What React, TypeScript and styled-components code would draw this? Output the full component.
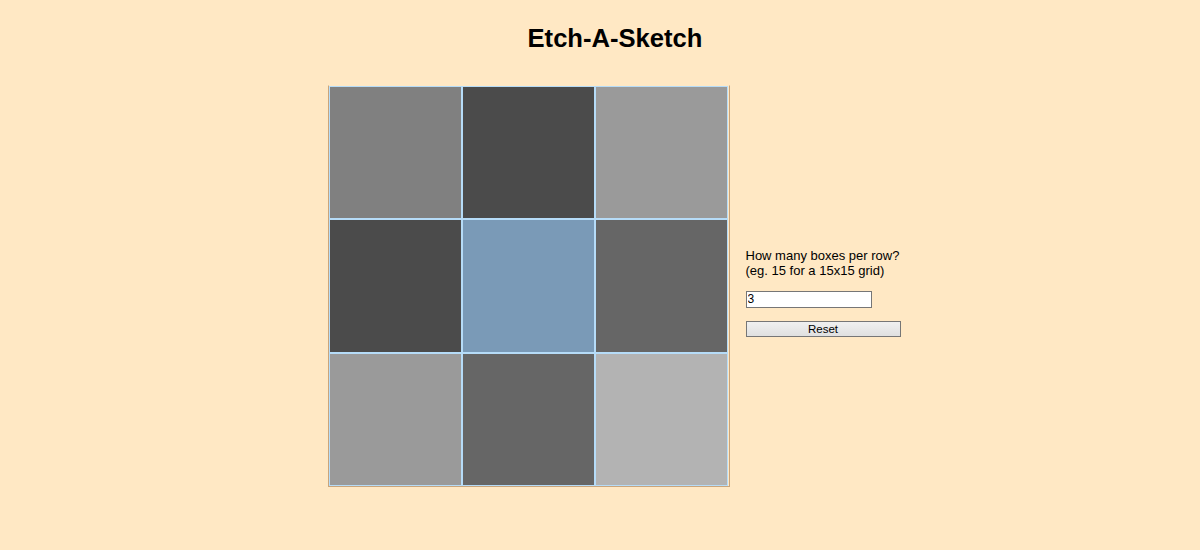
import React, { useState } from "react";
import styled, { createGlobalStyle } from "styled-components";

const GlobalStyle = createGlobalStyle`
  html, body {
    background: #ffe8c4;
  }
  body {
    margin: 8px;
    font-family: "Liberation Sans", Arial, sans-serif;
    color: #000;
  }
`;

// shades per cell, as they were left after some sketching
const SHADES = [
  "#808080", "#4b4b4b", "#9a9a9a",
  "#4b4b4b", "#7a9ab7", "#666666",
  "#9a9a9a", "#666666", "#b3b3b3",
];

export default function App() {
  const [size, setSize] = useState("3");
  const n = 3;

  return (
    <>
      <GlobalStyle />
      <Page>
        <Title>Etch-A-Sketch</Title>
        <Row>
          <Board $n={n}>
            {SHADES.map((c, i) => (
              <Cell key={i} style={{ background: c }} />
            ))}
          </Board>
          <Panel>
            <Prompt>
              How many boxes per row?
              <br />
              (eg. 15 for a 15x15 grid)
            </Prompt>
            <SizeInput value={size} onChange={(e) => setSize(e.target.value)} />
            <ResetBtn>Reset</ResetBtn>
          </Panel>
        </Row>
      </Page>
    </>
  );
}

const Page = styled.div`
  padding-left: 28px;
`;

const Title = styled.h1`
  margin: 16px 0 0;
  padding-left: 2px;
  text-align: center;
  font-size: 25.6px;
  font-weight: 700;
`;

const Row = styled.div`
  display: flex;
  justify-content: center;
  align-items: center;
  gap: 16px;
  margin-top: 32px;
`;

const Board = styled.div<{ $n: number }>`
  display: grid;
  grid-template-columns: repeat(${(p) => p.$n}, 1fr);
  grid-template-rows: repeat(${(p) => p.$n}, 1fr);
  width: 400px;
  height: 400px;
  border: 1px solid #c9a57c;
  border-top-color: #ffe8c4;
  flex-shrink: 0;
`;

const Cell = styled.div`
  border: 1px solid #b6dcf8;
  box-sizing: border-box;
`;

const Panel = styled.div`
  display: flex;
  flex-direction: column;
  align-items: flex-start;
  width: 155px;
  margin-top: 12px;
`;

const Prompt = styled.div`
  font-size: 13px;
  line-height: 15px;
  white-space: nowrap;
`;

const SizeInput = styled.input`
  margin-top: 13px;
  width: 126px;
  height: 17px;
  box-sizing: border-box;
  padding: 0 1px;
  border: 1px solid #767676;
  font-family: "Liberation Sans", Arial, sans-serif;
  font-size: 12px;
  background: #fff;
`;

const ResetBtn = styled.button`
  margin-top: 13px;
  width: 155px;
  height: 16px;
  box-sizing: border-box;
  padding: 0;
  border: 1px solid #767676;
  background: linear-gradient(#f0f0f0, #e0e0e0);
  font-family: "Liberation Sans", Arial, sans-serif;
  font-size: 11.5px;
  line-height: 14px;
  color: #000;
`;
